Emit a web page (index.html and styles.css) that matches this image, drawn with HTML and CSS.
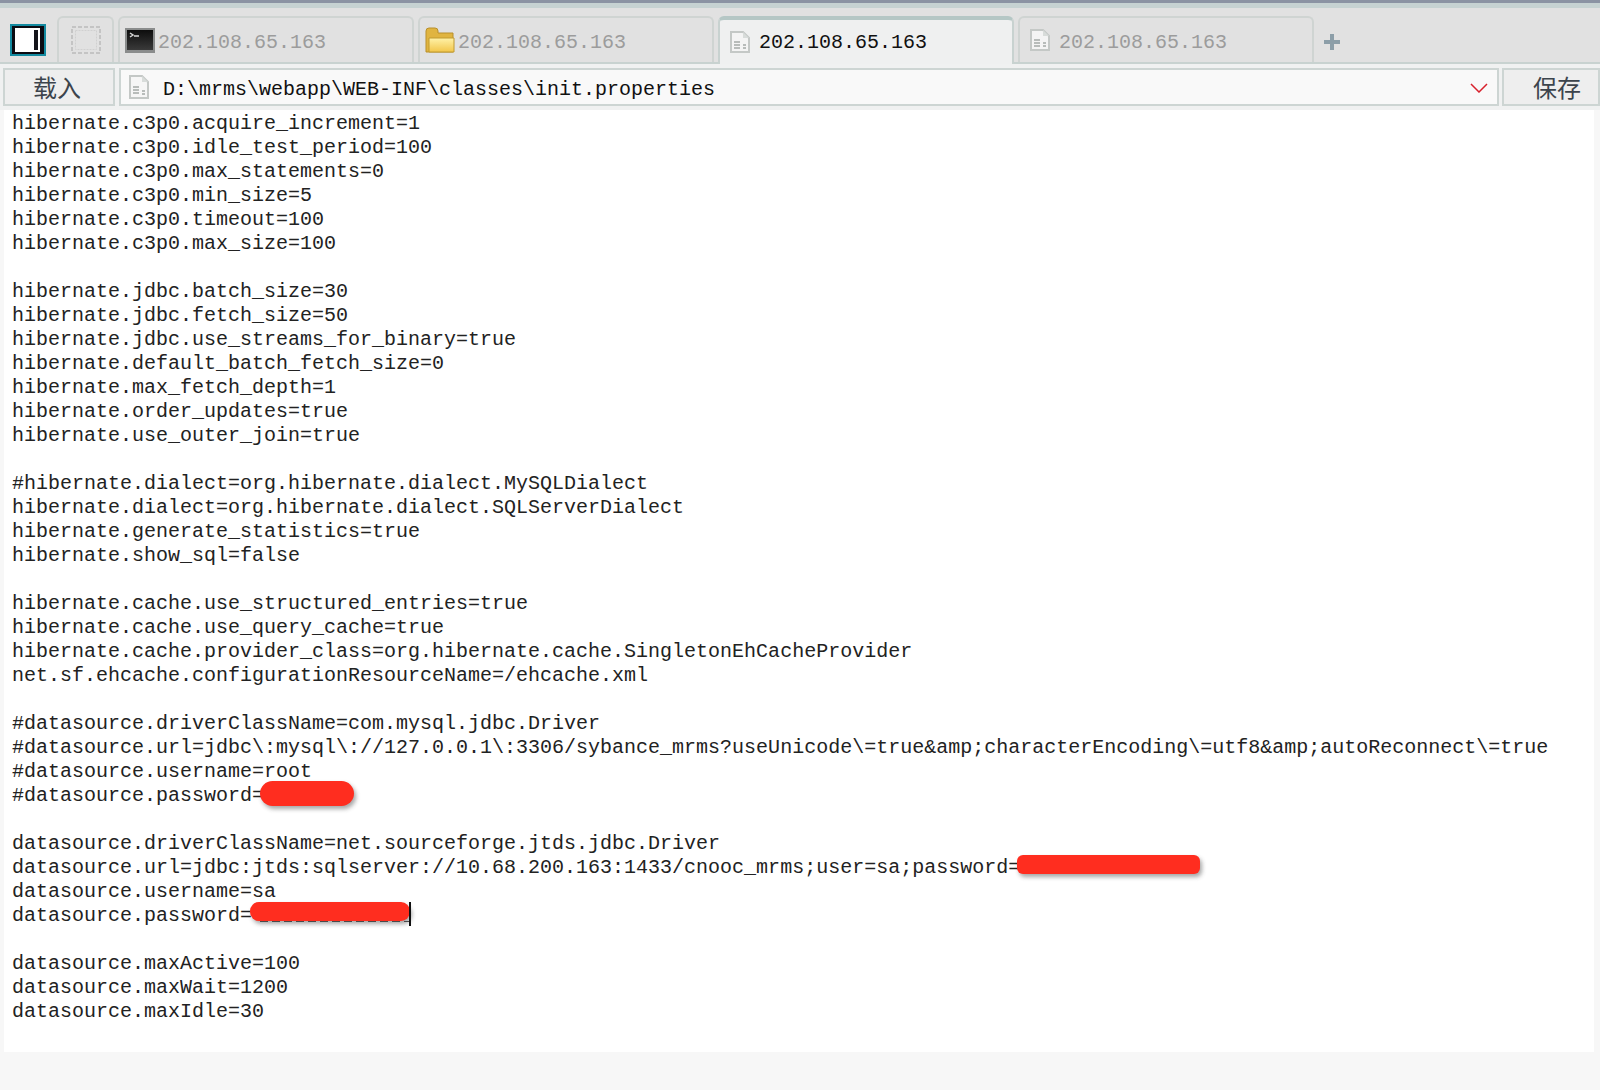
FILE: index.html
```html
<!DOCTYPE html>
<html lang="zh">
<head>
<meta charset="utf-8">
<title>202.108.65.163</title>
<link rel="stylesheet" href="styles.css">
</head>
<body>
<div class="app">
  <div class="strip-dark"></div>
  <div class="strip-light"></div>
  <div class="tabbar">
    <svg class="side-icon" width="36" height="32" viewBox="0 0 36 32"><rect x="1" y="1" width="34" height="30" fill="#0b0b12" stroke="#138aa0" stroke-width="2"/><rect x="5" y="4" width="25" height="24" fill="#fff"/><rect x="24" y="6" width="4" height="20" fill="#15151a"/></svg>
    <div class="tab tab-small">
      <svg width="30" height="28" viewBox="0 0 30 28"><rect x="4.500" y="4.500" width="21" height="19" fill="none" stroke="#d0d0d0" stroke-width="1" stroke-dasharray="2 1"/><rect x="1" y="1" width="28" height="26" fill="none" stroke="#c4c4c4" stroke-width="2" stroke-dasharray="4 2"/></svg>
    </div>
    <div class="tab">
      <svg class="tab-icon" width="30" height="25" viewBox="0 0 30 25"><defs><linearGradient id="term" x1="0" y1="0" x2="0" y2="1"><stop offset="0" stop-color="#0d0d0d"/><stop offset="1" stop-color="#3a3a3a"/></linearGradient></defs><rect x="0" y="0" width="30" height="25" fill="#8a8c8c"/><rect x="2" y="2" width="26" height="20" fill="url(#term)"/><path d="M5 5l3 2-3 2M9 8h5" stroke="#d8d8d8" stroke-width="1.500" fill="none"/></svg>
      <span class="tab-label">202.108.65.163</span>
    </div>
    <div class="tab">
      <svg class="tab-icon" width="30" height="27" viewBox="0 0 30 27"><defs><linearGradient id="fold" x1="0" y1="0" x2="0" y2="1"><stop offset="0" stop-color="#fff2a8"/><stop offset="1" stop-color="#f2c64a"/></linearGradient></defs><path d="M1 25V4q0-3 3-3h6q3 0 3 3v2h15v19z" fill="#e0b440" stroke="#b98f2a"/><path d="M4 25V11h25v14z" fill="url(#fold)" stroke="#c09a30"/></svg>
      <span class="tab-label">202.108.65.163</span>
    </div>
    <div class="tab tab-active">
      <svg class="tab-icon doc" width="20" height="22" viewBox="0 0 20 22"><path d="M1 1h12l6 6v14H1z" fill="#f4f4f4" stroke="#c4c8c6" stroke-width="2"/><path d="M13 1v6h6" fill="#d8dcda"/><path d="M4 11h6M4 14h6M4 17h6M13 14h3M13 17h3" stroke="#b8bcba" stroke-width="2"/></svg>
      <span class="tab-label">202.108.65.163</span>
    </div>
    <div class="tab">
      <svg class="tab-icon doc" width="20" height="22" viewBox="0 0 20 22"><path d="M1 1h12l6 6v14H1z" fill="#f4f4f4" stroke="#c4c8c6" stroke-width="2"/><path d="M13 1v6h6" fill="#d8dcda"/><path d="M4 11h6M4 14h6M4 17h6M13 14h3M13 17h3" stroke="#b8bcba" stroke-width="2"/></svg>
      <span class="tab-label">202.108.65.163</span>
    </div>
    <svg class="plus" width="16" height="16" viewBox="0 0 16 16"><path d="M8 0v16M0 8h16" stroke="#8c9ea8" stroke-width="4"/></svg>
  </div>
  <div class="pathbar">
    <button class="btn btn-load">载入</button>
    <div class="path-field">
      <svg class="doc" width="20" height="24" viewBox="0 0 20 24"><path d="M1 1h12l6 6v16H1z" fill="#f6f6f6" stroke="#c4c8c6" stroke-width="2"/><path d="M13 1v6h6" fill="#d8dcda"/><path d="M4 12h6M4 15h6M4 18h6M13 16h3M13 19h3" stroke="#b8bcba" stroke-width="2"/></svg>
      <span class="path-text">D:\mrms\webapp\WEB-INF\classes\init.properties</span>
      <svg class="chevron" width="18" height="10" viewBox="0 0 18 10"><path d="M1 1l8 8 8-8" fill="none" stroke="#d8202c" stroke-width="1.500"/></svg>
    </div>
    <button class="btn btn-save">保存</button>
  </div>
  <div class="editor">
<pre class="code">hibernate.c3p0.acquire_increment=1
hibernate.c3p0.idle_test_period=100
hibernate.c3p0.max_statements=0
hibernate.c3p0.min_size=5
hibernate.c3p0.timeout=100
hibernate.c3p0.max_size=100

hibernate.jdbc.batch_size=30
hibernate.jdbc.fetch_size=50
hibernate.jdbc.use_streams_for_binary=true
hibernate.default_batch_fetch_size=0
hibernate.max_fetch_depth=1
hibernate.order_updates=true
hibernate.use_outer_join=true

#hibernate.dialect=org.hibernate.dialect.MySQLDialect
hibernate.dialect=org.hibernate.dialect.SQLServerDialect
hibernate.generate_statistics=true
hibernate.show_sql=false

hibernate.cache.use_structured_entries=true
hibernate.cache.use_query_cache=true
hibernate.cache.provider_class=org.hibernate.cache.SingletonEhCacheProvider
net.sf.ehcache.configurationResourceName=/ehcache.xml

#datasource.driverClassName=com.mysql.jdbc.Driver
#datasource.url=jdbc\:mysql\://127.0.0.1\:3306/sybance_mrms?useUnicode\=true&amp;amp;characterEncoding\=utf8&amp;amp;autoReconnect\=true
#datasource.username=root
#datasource.password=

datasource.driverClassName=net.sourceforge.jtds.jdbc.Driver
datasource.url=jdbc:jtds:sqlserver://10.68.200.163:1433/cnooc_mrms;user=sa;password=
datasource.username=sa
datasource.password=

datasource.maxActive=100
datasource.maxWait=1200
datasource.maxIdle=30</pre>
    <div class="redact redact-a"></div>
    <div class="redact redact-b"></div>
    <div class="under-c"></div>
    <div class="redact redact-c"></div>
    <div class="caret"></div>
  </div>
</div>
</body>
</html>
```
FILE: styles.css
```css
* { box-sizing: border-box; }
html, body { margin: 0; padding: 0; }
body { background: #f7f7f7; font-family: "Liberation Mono", monospace; }
.app { width: 1600px; height: 1090px; display: flex; flex-direction: column; overflow: hidden; }
.strip-dark { height: 3px; background: #8b93a3; }
.strip-light { height: 5px; background: #c6d2d2; }
.tabbar { height: 56px; background: #e1e1e1; border-bottom: 2px solid #c8d2d0; display: flex; align-items: flex-end; padding-left: 10px; }
.side-icon { margin: 0 11px 6px 0; }
.tab { width: 296px; height: 46px; margin-right: 4px; border: 2px solid #cfd4d2; border-bottom: 0; border-radius: 6px 6px 0 0; display: flex; align-items: center; padding: 0 0 0 5px; gap: 3px; background: #e1e1e1; }
.tab-small { width: 57px; justify-content: center; padding: 0; }
.tab-icon { flex: none; }
.tab-icon.doc { margin: 0 6px 0 5px; }
.tab-label { font-size: 20px; line-height: 24px; color: #9c9c9c; padding-top: 6px; }
.tab-active { height: 48px; margin-bottom: -2px; background: #eff0f0; border-top: 4px solid #b5c7c5; border-left-color: #c8d2d0; border-right-color: #c8d2d0; position: relative; }
.tab-active .tab-label { color: #111; padding-top: 2px; }
.plus { margin: 0 0 12px 6px; }
.pathbar { height: 46px; background: #f0f1f1; padding: 4px 0 4px 3px; display: flex; gap: 4px; }
.btn { height: 38px; border: 2px solid #cdd5d3; background: #eeeeee; font-family: "Noto Sans CJK SC", sans-serif; font-size: 24px; line-height: 30px; color: #3c444c; padding: 0; }
.btn-load { width: 112px; padding-right: 4px; }
.btn-save { width: 98px; margin-left: -1px; padding-left: 12px; }
.path-field { width: 1381px; height: 38px; border: 2px solid #cdd5d3; background: #f9f9f9; display: flex; align-items: center; padding: 0 9px 0 8px; }
.path-text { font-size: 20px; line-height: 24px; color: #111; margin-left: 14px; padding-top: 6px; }
.chevron { margin-left: auto; margin-top: 2px; }
.editor { position: relative; width: 1590px; height: 942px; margin-left: 4px; background: #fff; padding-top: 2px; }
.code { margin: 0; padding: 0 0 0 8px; font-family: "Liberation Mono", monospace; font-size: 20px; line-height: 24px; color: #222; }
.redact { position: absolute; background: #ff2d1f; box-shadow: 2px 3px 4px rgba(60, 60, 60, .45); }
.redact-a { left: 256px; top: 671px; width: 94px; height: 25px; border-radius: 13px; }
.redact-b { left: 1013px; top: 745px; width: 183px; height: 19px; border-radius: 6px; }
.redact-c { left: 246px; top: 792px; width: 160px; height: 19px; border-radius: 9px; }
.under-c { position: absolute; left: 256px; top: 811px; width: 150px; height: 1px; background: repeating-linear-gradient(90deg, #555 0 8px, #fff 8px 12px); }
.caret { position: absolute; left: 405px; top: 792px; width: 2px; height: 24px; background: #111; }
```
